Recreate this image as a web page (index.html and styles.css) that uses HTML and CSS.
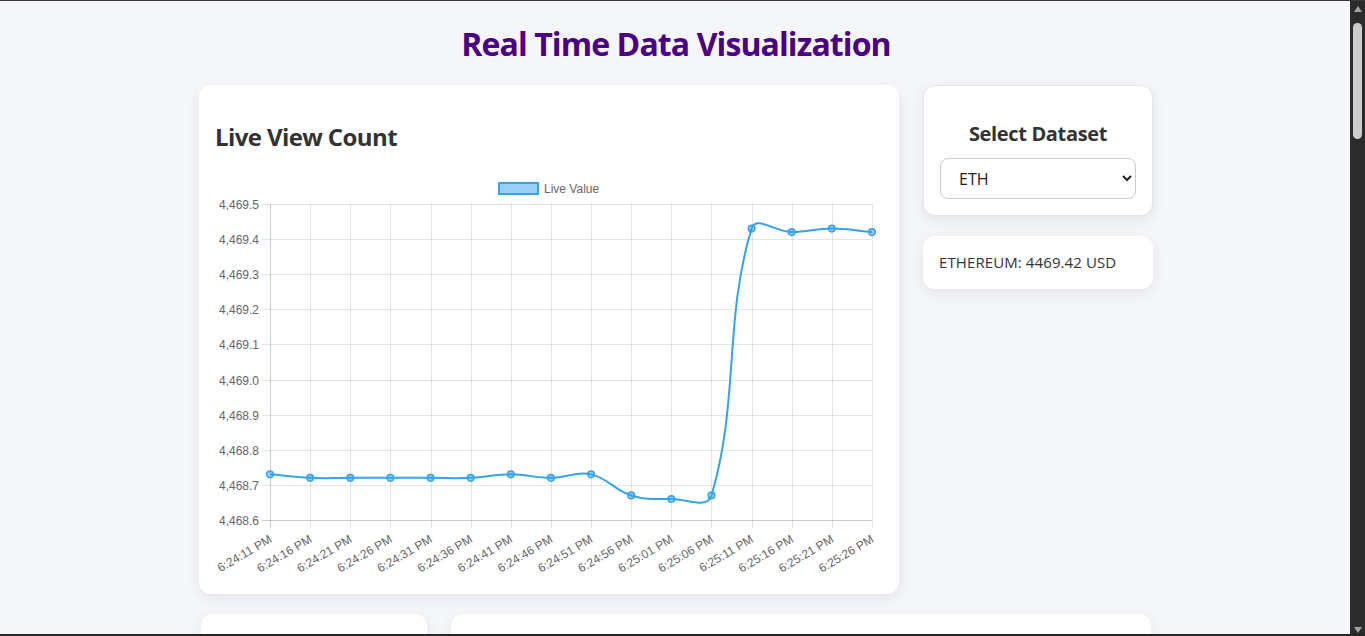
FILE: index.html
```html
<!DOCTYPE html>
<html lang="en">
<head>
<meta charset="utf-8">
<title>Real Time Data Visualization</title>
<link rel="stylesheet" href="styles.css">
</head>
<body>
<div class="page">
  <h1 class="title">Real Time Data Visualization</h1>
  <div class="top-row">
    <section class="card chart-card">
      <h2 class="card-title">Live View Count</h2>
      <svg id="chart" class="chart" width="668" height="405" viewBox="0 0 668 405"></svg>
    </section>
    <aside class="side">
      <section class="card select-card">
        <h3 class="select-title">Select Dataset</h3>
        <select class="dataset-select">
          <option>ETH</option>
          <option>BTC</option>
        </select>
      </section>
      <section class="card price-card">ETHEREUM: 4469.42 USD</section>
    </aside>
  </div>
  <div class="bottom-row">
    <section class="card small-card"></section>
    <section class="card wide-card"></section>
  </div>
</div>
<div class="scrollbar" aria-hidden="true">
  <div class="sb-btn"><span class="sb-up"></span></div>
  <div class="sb-thumb"></div>
  <div class="sb-fill"></div>
  <div class="sb-btn"><span class="sb-down"></span></div>
</div>
<script src="script.js"></script>
</body>
</html>
```
FILE: styles.css
```css
html {
  scrollbar-width: none;
}
html::before {
  content: "";
  position: fixed;
  top: 0;
  left: 0;
  right: 0;
  height: 1px;
  background: #3b3535;
  z-index: 10;
}
html::after {
  content: "";
  position: fixed;
  bottom: 0;
  left: 0;
  right: 0;
  height: 2px;
  background: #262626;
  z-index: 10;
}
body {
  margin: 0;
  background: #f4f6f9;
  font-family: "Open Sans", "Noto Sans", sans-serif;
  color: #333;
}
.page {
  margin-right: 15px;
  padding: 22px 0 20px 2px;
}
.title {
  margin: 0 0 19px;
  text-align: center;
  font-size: 32px;
  line-height: 44px;
  font-weight: 700;
  letter-spacing: -0.9px;
  color: #4b0082;
}
.top-row {
  display: flex;
  justify-content: center;
  align-items: flex-start;
  gap: 24px;
}
.card {
  background: #fff;
  border-radius: 12px;
  box-shadow: 0 4px 14px rgba(0, 0, 0, 0.08);
  box-sizing: border-box;
}
.chart-card {
  width: 700px;
  height: 509px;
  padding: 16px;
}
.card-title {
  margin: 20px 0;
  font-size: 24px;
  line-height: 32px;
  font-weight: 700;
  letter-spacing: -0.6px;
  color: #333;
}
.chart {
  display: block;
}
.side {
  width: 230px;
  display: flex;
  flex-direction: column;
  gap: 20px;
}
.select-card {
  border: 1px solid #e3e5ea;
  padding: 16px 16px 16px;
  text-align: center;
}
.select-title {
  margin: 19px 0 11px;
  font-size: 20px;
  line-height: 26px;
  font-weight: 700;
  letter-spacing: -0.35px;
  color: #333;
}
.dataset-select {
  display: block;
  width: 196px;
  height: 41px;
  padding: 0 10px 0 14px;
  border: 1px solid #ccc;
  border-radius: 8px;
  background: #fff;
  font-family: "Open Sans", "Noto Sans", sans-serif;
  font-size: 16px;
  color: #222;
}
.price-card {
  padding: 16px;
  font-size: 15px;
  line-height: 21px;
  letter-spacing: 0.1px;
  color: #333;
}
.bottom-row {
  display: flex;
  justify-content: center;
  gap: 24px;
  margin-top: 20px;
}
.small-card {
  width: 226px;
  height: 2556px;
}
.wide-card {
  width: 700px;
  height: 2556px;
}
.scrollbar {
  position: fixed;
  top: 0;
  right: 0;
  bottom: 0;
  width: 15px;
  background: #2b2b2b;
  display: flex;
  flex-direction: column;
  align-items: center;
  z-index: 5;
}
.sb-btn {
  height: 17px;
  width: 15px;
  display: flex;
  align-items: center;
  justify-content: center;
}
.sb-up {
  width: 0;
  height: 0;
  border-left: 4.5px solid transparent;
  border-right: 4.5px solid transparent;
  border-bottom: 6px solid #a3a3a3;
}
.sb-down {
  width: 0;
  height: 0;
  margin-top: 4px;
  border-left: 4.5px solid transparent;
  border-right: 4.5px solid transparent;
  border-top: 6px solid #a3a3a3;
}
.sb-thumb {
  margin-top: 6px;
  width: 9px;
  height: 116px;
  border-radius: 5px;
  background: #cdcdcd;
}
.sb-fill {
  flex: 1;
}
.grid {
  stroke: rgba(0, 0, 0, 0.1);
  stroke-width: 1;
}
.axis {
  stroke: rgba(0, 0, 0, 0.2);
  stroke-width: 1;
}
.tick-text {
  font-family: "Liberation Sans", Arial, sans-serif;
  font-size: 12px;
  fill: #666;
}
.ytick {
  text-anchor: end;
  dominant-baseline: central;
}
.xtick {
  text-anchor: end;
  dominant-baseline: text-before-edge;
}
.legend-text {
  dominant-baseline: central;
}
.legend-box {
  fill: rgba(54, 162, 235, 0.5);
  stroke: #36a2eb;
  stroke-width: 2;
}
.line {
  fill: none;
  stroke: #36a2eb;
  stroke-width: 2;
}
.point {
  fill: rgba(54, 162, 235, 0.5);
  stroke: #36a2eb;
  stroke-width: 1.5;
}
```
FILE: script.js
```js
(function () {
  var svg = document.getElementById('chart');
  var L = 55, R = 657, T = 31, B = 347;
  var vals = [4468.73, 4468.72, 4468.72, 4468.72, 4468.72, 4468.72, 4468.73, 4468.72,
              4468.73, 4468.67, 4468.66, 4468.67, 4469.43, 4469.42, 4469.43, 4469.42];
  var labels = ['6:24:11 PM', '6:24:16 PM', '6:24:21 PM', '6:24:26 PM', '6:24:31 PM',
                '6:24:36 PM', '6:24:41 PM', '6:24:46 PM', '6:24:51 PM', '6:24:56 PM',
                '6:25:01 PM', '6:25:06 PM', '6:25:11 PM', '6:25:16 PM', '6:25:21 PM',
                '6:25:26 PM'];
  var min = 4468.6, max = 4469.5;
  var n = vals.length;
  function X(i) { return L + i * (R - L) / (n - 1); }
  function Y(v) { return B - (v - min) / (max - min) * (B - T); }
  function fmt(v) { var s = v.toFixed(1); return s.slice(0, 1) + ',' + s.slice(1); }
  var out = '';
  out += '<rect class="legend-box" x="284" y="10" width="39" height="11"/>';
  out += '<text class="tick-text legend-text" x="329" y="15.5">Live Value</text>';
  for (var k = 0; k < 10; k++) {
    var v = max - k * 0.1;
    var y = Math.round(Y(v)) + 0.5;
    out += '<line class="' + (k === 9 ? 'axis' : 'grid') + '" x1="' + (L - 8) + '" x2="' + R + '" y1="' + y + '" y2="' + y + '"/>';
    out += '<text class="tick-text ytick" x="' + (L - 11) + '" y="' + y + '">' + fmt(v) + '</text>';
  }
  for (var i = 0; i < n; i++) {
    var x = Math.round(X(i)) + 0.5;
    out += '<line class="' + (i === 0 ? 'axis' : 'grid') + '" x1="' + x + '" x2="' + x + '" y1="' + T + '" y2="' + (B + 8) + '"/>';
    var ax = X(i) - 3, ay = B + 12;
    out += '<text class="tick-text xtick" x="' + ax.toFixed(2) + '" y="' + ay + '" transform="rotate(-30.7 ' + ax.toFixed(2) + ' ' + ay + ')">' + labels[i] + '</text>';
  }
  var pts = vals.map(function (v, i) { return { x: X(i), y: Y(v) }; });
  var t = 0.4;
  var cps = pts.map(function (p, i) {
    var p0 = pts[i - 1] || p, p2 = pts[i + 1] || p;
    var d01 = Math.hypot(p.x - p0.x, p.y - p0.y), d12 = Math.hypot(p2.x - p.x, p2.y - p.y);
    var s01 = d01 / (d01 + d12), s12 = d12 / (d01 + d12);
    if (!isFinite(s01)) s01 = 0;
    if (!isFinite(s12)) s12 = 0;
    var fa = t * s01, fb = t * s12;
    function cy(v) { return Math.max(T, Math.min(B, v)); }
    return {
      px: p.x - fa * (p2.x - p0.x), py: cy(p.y - fa * (p2.y - p0.y)),
      nx: p.x + fb * (p2.x - p0.x), ny: cy(p.y + fb * (p2.y - p0.y))
    };
  });
  var d = 'M' + pts[0].x.toFixed(2) + ' ' + pts[0].y.toFixed(2);
  for (var j = 1; j < n; j++) {
    d += ' C' + cps[j - 1].nx.toFixed(2) + ' ' + cps[j - 1].ny.toFixed(2) + ' ' +
         cps[j].px.toFixed(2) + ' ' + cps[j].py.toFixed(2) + ' ' +
         pts[j].x.toFixed(2) + ' ' + pts[j].y.toFixed(2);
  }
  out += '<path class="line" d="' + d + '"/>';
  pts.forEach(function (p) {
    out += '<circle class="point" cx="' + p.x.toFixed(2) + '" cy="' + p.y.toFixed(2) + '" r="3.3"/>';
  });
  svg.innerHTML = out;
})();
```
